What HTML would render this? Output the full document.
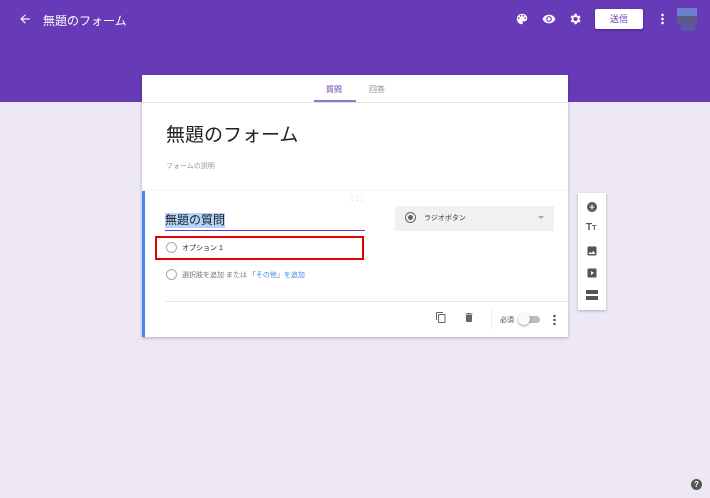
<!DOCTYPE html>
<html><head><meta charset="utf-8"><style>
*{margin:0;padding:0;box-sizing:border-box}
body{width:710px;height:498px;background:#ede7f6;font-family:"Liberation Sans","Noto Sans CJK JP",sans-serif;position:relative;overflow:hidden}
.hdr{position:absolute;left:0;top:0;width:710px;height:102px;background:#673ab7}
.abs{position:absolute}
.card{position:absolute;background:#fff;box-shadow:0 1px 3px rgba(0,0,0,.25)}
</style></head><body>
<div class="hdr"></div>
<svg class="abs" style="left:18px;top:12px" width="14" height="14" viewBox="0 0 24 24"><path d="M20 11H7.8l5.6-5.6L12 4l-8 8 8 8 1.4-1.4L7.8 13H20z" fill="#fff"/></svg>
<div class="abs" style="left:43px;top:12px;color:#fff;font-size:12px">無題のフォーム</div>
<svg class="abs" style="left:515px;top:12px" width="14" height="14" viewBox="0 0 24 24"><path fill="#fff" d="M12 3a9 9 0 000 18c.8 0 1.5-.7 1.5-1.5 0-.4-.1-.7-.4-1-.2-.3-.4-.6-.4-1 0-.8.7-1.5 1.5-1.5H16a5 5 0 005-5c0-4.4-4-8-9-8zm-5.5 9a1.5 1.5 0 110-3 1.5 1.5 0 010 3zm3-4a1.5 1.5 0 110-3 1.5 1.5 0 010 3zm5 0a1.5 1.5 0 110-3 1.5 1.5 0 010 3zm3 4a1.5 1.5 0 110-3 1.5 1.5 0 010 3z"/></svg>
<svg class="abs" style="left:542px;top:12px" width="14" height="14" viewBox="0 0 24 24"><path fill="#fff" d="M12 4.5C7 4.5 2.7 7.6 1 12c1.7 4.4 6 7.5 11 7.5s9.3-3.1 11-7.5c-1.7-4.4-6-7.5-11-7.5zM12 17a5 5 0 110-10 5 5 0 010 10zm0-8a3 3 0 100 6 3 3 0 000-6z"/></svg>
<svg class="abs" style="left:568px;top:12px" width="14" height="14" viewBox="0 0 24 24"><path fill="#fff" d="M19.4 13a7.5 7.5 0 000-2l2.1-1.6-2-3.5-2.5 1a7 7 0 00-1.7-1L15 3h-4l-.4 2.7a7 7 0 00-1.7 1l-2.5-1-2 3.5L6.6 11a7.5 7.5 0 000 2l-2.1 1.6 2 3.5 2.5-1c.5.4 1.1.7 1.7 1L11 21h4l.4-2.7c.6-.3 1.2-.6 1.7-1l2.5 1 2-3.5zM13 15.5a3.5 3.5 0 110-7 3.5 3.5 0 010 7z"/></svg>
<div class="abs" style="left:595px;top:9px;width:48px;height:20px;background:#fff;border-radius:2px;box-shadow:0 1px 2px rgba(0,0,0,.3);color:#673ab7;font-size:9px;text-align:center;line-height:20px">送信</div>
<div class="abs" style="left:661px;top:13px;width:3px;height:12px;background:radial-gradient(circle,#fff 1.2px,transparent 1.5px) 0 0/3px 4px"></div>
<div class="abs" style="left:677px;top:8px;width:20px;height:8px;background:#6d7fcf"></div>
<div class="abs" style="left:677px;top:16px;width:20px;height:9px;background:#5b5a8a"></div>
<div class="abs" style="left:681px;top:25px;width:14px;height:6px;background:#5a55a8"></div>

<div class="card" style="left:142px;top:75px;width:426px;height:116px">
  <div class="abs" style="left:184px;top:9px;font-size:8px;color:#673ab7">質問</div>
  <div class="abs" style="left:227px;top:9px;font-size:8px;color:#888">回答</div>
  <div class="abs" style="left:172px;top:25px;width:42px;height:2px;background:#9575cd"></div>
  <div class="abs" style="left:0;top:27px;width:426px;height:1px;background:#e0e0e0"></div>
  <div class="abs" style="left:24px;top:45px;font-size:19px;color:#212121">無題のフォーム</div>
  <div class="abs" style="left:24px;top:86px;font-size:7px;color:#999">フォームの説明</div>
</div>

<div class="card" style="left:142px;top:191px;width:426px;height:146px;border-left:3px solid #4285f4">
  <div class="abs" style="left:204px;top:4px;font-size:6px;color:#bbb;letter-spacing:-1px">⋮⋮⋮</div>
  <div class="abs" style="left:20px;top:22px;font-size:12px;color:#222;background:#b3d4fc;line-height:15px">無題の質問</div>
  <div class="abs" style="left:20px;top:39px;width:200px;height:1px;background:#673ab7"></div>
  <div class="abs" style="left:10px;top:45px;width:209px;height:24px;border:2px solid #e00000"></div>
  <div class="abs" style="left:21px;top:51px;width:11px;height:11px;border:1px solid #aaa;border-radius:50%"></div>
  <div class="abs" style="left:37px;top:52px;font-size:7px;color:#222">オプション 1</div>
  <div class="abs" style="left:21px;top:78px;width:11px;height:11px;border:1px solid #aaa;border-radius:50%"></div>
  <div class="abs" style="left:37px;top:79px;font-size:7px;color:#777">選択肢を追加 または <span style="color:#4285f4">「その他」を追加</span></div>
  <div class="abs" style="left:250px;top:15px;width:159px;height:25px;background:#f1f1f1"></div>
  <div class="abs" style="left:260px;top:21px;width:11px;height:11px;border:1px solid #666;border-radius:50%"></div>
  <div class="abs" style="left:263px;top:24px;width:5px;height:5px;background:#666;border-radius:50%"></div>
  <div class="abs" style="left:279px;top:22px;font-size:7px;color:#333">ラジオボタン</div>
  <div class="abs" style="left:393px;top:25px;border:3px solid transparent;border-top:3px solid #aaa"></div>
  <div class="abs" style="left:20px;top:110px;width:404px;height:1px;background:#e8e8e8"></div>
  <svg class="abs" style="left:290px;top:120px" width="12" height="13" viewBox="0 0 24 24"><path fill="#666" d="M16 1H4a2 2 0 00-2 2v14h2V3h12zm3 4H8a2 2 0 00-2 2v14a2 2 0 002 2h11a2 2 0 002-2V7a2 2 0 00-2-2zm0 16H8V7h11z"/></svg>
  <svg class="abs" style="left:318px;top:120px" width="12" height="13" viewBox="0 0 24 24"><path fill="#666" d="M6 19a2 2 0 002 2h8a2 2 0 002-2V7H6zM19 4h-3.5l-1-1h-5l-1 1H5v2h14z"/></svg>
  <div class="abs" style="left:346px;top:116px;width:1px;height:22px;background:#eee"></div>
  <div class="abs" style="left:355px;top:124px;font-size:7px;color:#444">必須</div>
  <div class="abs" style="left:375px;top:125px;width:20px;height:7px;background:#bbb;border-radius:4px"></div>
  <div class="abs" style="left:373px;top:122px;width:12px;height:12px;background:#fafafa;border-radius:50%;box-shadow:0 1px 2px rgba(0,0,0,.4)"></div>
  <div class="abs" style="left:408px;top:123px;width:3px;height:11px;background:radial-gradient(circle,#555 1.1px,transparent 1.4px) 0 0/3px 4px"></div>
</div>

<div class="card" style="left:578px;top:193px;width:28px;height:117px">
  <svg class="abs" style="left:8px;top:8px" width="12" height="12" viewBox="0 0 24 24"><path fill="#555" d="M12 2a10 10 0 100 20 10 10 0 000-20zm5 11h-4v4h-2v-4H7v-2h4V7h2v4h4z"/></svg>
  <div class="abs" style="left:8px;top:29px;font-size:10px;font-weight:bold;color:#555">T<span style="font-size:7px">T</span></div>
  <svg class="abs" style="left:8px;top:52px" width="12" height="12" viewBox="0 0 24 24"><path fill="#555" d="M21 19V5a2 2 0 00-2-2H5a2 2 0 00-2 2v14a2 2 0 002 2h14a2 2 0 002-2zM8.5 13.5l2.5 3 3.5-4.5 4.5 6H5z"/></svg>
  <svg class="abs" style="left:8px;top:74px" width="12" height="12" viewBox="0 0 24 24"><path fill="#555" d="M19 3H5a2 2 0 00-2 2v14a2 2 0 002 2h14a2 2 0 002-2V5a2 2 0 00-2-2zM10 16V8l6 4z"/></svg>
  <div class="abs" style="left:8px;top:97px;width:12px;height:4px;background:#555"></div>
  <div class="abs" style="left:8px;top:103px;width:12px;height:4px;background:#555"></div>
</div>

<div class="abs" style="left:691px;top:479px;width:11px;height:11px;border-radius:50%;background:#555;color:#fff;font-size:8px;font-weight:bold;text-align:center;line-height:11px">?</div>
</body></html>
